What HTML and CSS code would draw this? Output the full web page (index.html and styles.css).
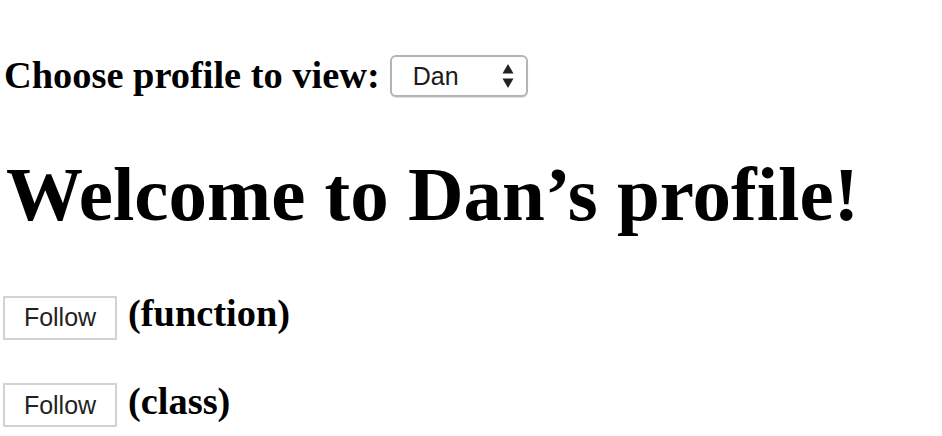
FILE: index.html
```html
<!DOCTYPE html>
<html>
<head>
<meta charset="utf-8">
<link rel="stylesheet" href="styles.css">
</head>
<body>
<div class="page">
  <div class="chooser">
    <label class="label" for="profile">Choose profile to view:</label>
    <div class="select-wrap">
      <select id="profile" class="select">
        <option>Dan</option>
        <option>Sophie</option>
        <option>Sunil</option>
      </select>
      <svg class="arrows" width="14" height="26" viewBox="0 0 14 26" aria-hidden="true">
        <path d="M7 1 L12.5 10.5 L1.5 10.5 Z" fill="#222"/>
        <path d="M7 25 L12.5 15.5 L1.5 15.5 Z" fill="#222"/>
      </svg>
    </div>
  </div>
  <h1 class="title">Welcome to Dan’s profile!</h1>
  <div class="follow-row first">
    <button class="follow">Follow</button>
    <span class="kind">(function)</span>
  </div>
  <div class="follow-row second">
    <button class="follow">Follow</button>
    <span class="kind">(class)</span>
  </div>
</div>
</body>
</html>
```

FILE: styles.css
```css
html, body {
  margin: 0;
  padding: 0;
  background: #ffffff;
}

.page {
  padding: 55px 0 0 4px;
  font-family: "Liberation Serif", "Times New Roman", serif;
  color: #000;
}

.chooser {
  display: flex;
  align-items: center;
  height: 42px;
  gap: 10px;
}

.label {
  font-size: 38.4px;
  font-weight: bold;
  line-height: 42px;
  position: relative;
  top: -1px;
}

.select-wrap {
  position: relative;
  width: 138px;
  height: 42px;
}

.select {
  -webkit-appearance: none;
  appearance: none;
  box-sizing: border-box;
  width: 138px;
  height: 42px;
  margin: 0;
  padding: 0 0 0 21px;
  border: 2px solid #b4b4b4;
  border-radius: 6px;
  background: #ffffff;
  font-family: "Liberation Sans", Arial, sans-serif;
  font-size: 25px;
  color: #1a1a1a;
  box-shadow: 0 1px 1px rgba(0,0,0,0.12);
}

.arrows {
  position: absolute;
  right: 13px;
  top: 8px;
  pointer-events: none;
}

.title {
  margin: 59px 0 0 2px;
  font-size: 77px;
  font-weight: bold;
  line-height: 77px;
}

.follow-row {
  display: flex;
  align-items: baseline;
  gap: 11px;
}

.follow-row.first {
  margin-top: 58px;
}

.follow-row.second {
  margin-top: 39px;
}

.follow {
  box-sizing: border-box;
  width: 114px;
  height: 44px;
  margin: 0 0 0 -1px;
  padding: 0;
  border: 2px solid #d2d2d2;
  border-radius: 1px;
  background: #ffffff;
  font-family: "Liberation Sans", Arial, sans-serif;
  font-size: 25px;
  color: #222;
}

.kind {
  font-size: 38.4px;
  font-weight: bold;
}
```
